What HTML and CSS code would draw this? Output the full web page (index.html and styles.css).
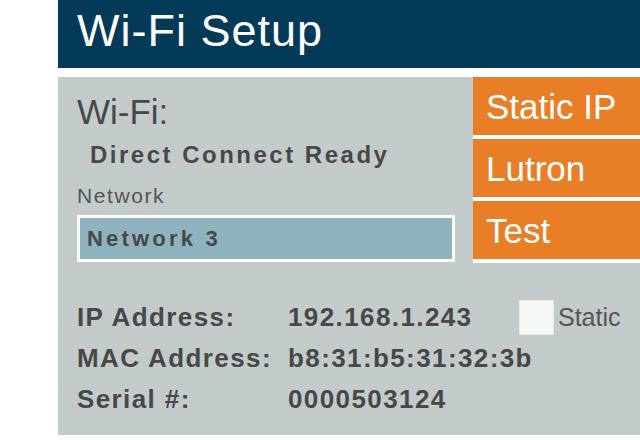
FILE: index.html
```html
<!DOCTYPE html>
<html lang="en">
<head>
    <meta charset="UTF-8">
    <title>Wi-Fi Setup</title>
    <link rel="stylesheet" href="styles.css">
</head>
<body>
    <div class="screen">
        <header class="title-bar">
            <h1>Wi-Fi Setup</h1>
        </header>

        <main class="panel">
            <div class="top">
                <div class="status">
                    <div class="wifi-label">Wi-Fi:</div>
                    <div class="wifi-state">Direct Connect Ready</div>
                    <div class="field-label">Network</div>
                    <div class="network-box">Network 3</div>
                </div>
                <nav class="menu">
                    <div class="menu-btn">Static IP</div>
                    <div class="menu-btn">Lutron</div>
                    <div class="menu-btn">Test</div>
                </nav>
            </div>

            <div class="info">
                <div class="info-label">IP Address:</div>
                <div class="info-value">192.168.1.243</div>
                <div class="static-opt">
                    <span class="checkbox"></span>
                    <span class="static-text">Static</span>
                </div>

                <div class="info-label">MAC Address:</div>
                <div class="info-value wide">b8:31:b5:31:32:3b</div>

                <div class="info-label">Serial #:</div>
                <div class="info-value wide">0000503124</div>
            </div>
        </main>
    </div>
</body>
</html>
```

FILE: styles.css
```css
body {
    margin: 0;
    background: #fff;
    font-family: "Liberation Sans", Arial, sans-serif;
    color: #484848;
}

.screen {
    margin-left: 58px;
}

/* header */
.title-bar {
    background: #033a57;
    height: 68px;
    border-bottom: 9px solid #fff;
}

.title-bar h1 {
    margin: 0;
    padding-left: 19px;
    font-size: 45px;
    font-weight: normal;
    line-height: 62px;
    letter-spacing: 1px;
    color: #fff;
}

/* main panel */
.panel {
    background: #c3cbca;
    height: 358px;
}

.top {
    display: flex;
}

.status {
    flex: 1;
    padding: 15px 18px 0 19px;
}

.wifi-label {
    font-size: 35px;
    line-height: 40px;
}

.wifi-state {
    margin: 8px 0 0 13px;
    font-size: 24px;
    font-weight: bold;
    line-height: 30px;
    letter-spacing: 2.5px;
}

.field-label {
    margin-top: 14px;
    font-size: 21px;
    line-height: 24px;
    letter-spacing: 1.6px;
    color: #555;
}

.network-box {
    margin-top: 7px;
    border: 3px solid #fff;
    background: #8eb3bf;
    padding-left: 7px;
    font-size: 22px;
    font-weight: bold;
    line-height: 41px;
    letter-spacing: 3.2px;
}

/* right side buttons */
.menu {
    width: 167px;
}

.menu-btn {
    background: #e87f27;
    color: #fff;
    font-size: 35px;
    line-height: 56px;
    padding: 2px 0 0 13px;
    border-bottom: 4px solid #fff;
}

/* device info */
.info {
    display: grid;
    grid-template-columns: 211px 231px auto;
    margin-top: 34px;
    padding-left: 19px;
    font-size: 26px;
    font-weight: bold;
    line-height: 41px;
    letter-spacing: 1.4px;
}

.info-value.wide {
    grid-column: span 2;
}

.static-opt {
    display: flex;
    align-items: center;
    gap: 4px;
}

.checkbox {
    width: 33px;
    height: 33px;
    background: #f4f9f6;
    border: 1px solid #e2e8e5;
}

.static-text {
    font-size: 25px;
    font-weight: normal;
    letter-spacing: 0;
    color: #555;
}
```
